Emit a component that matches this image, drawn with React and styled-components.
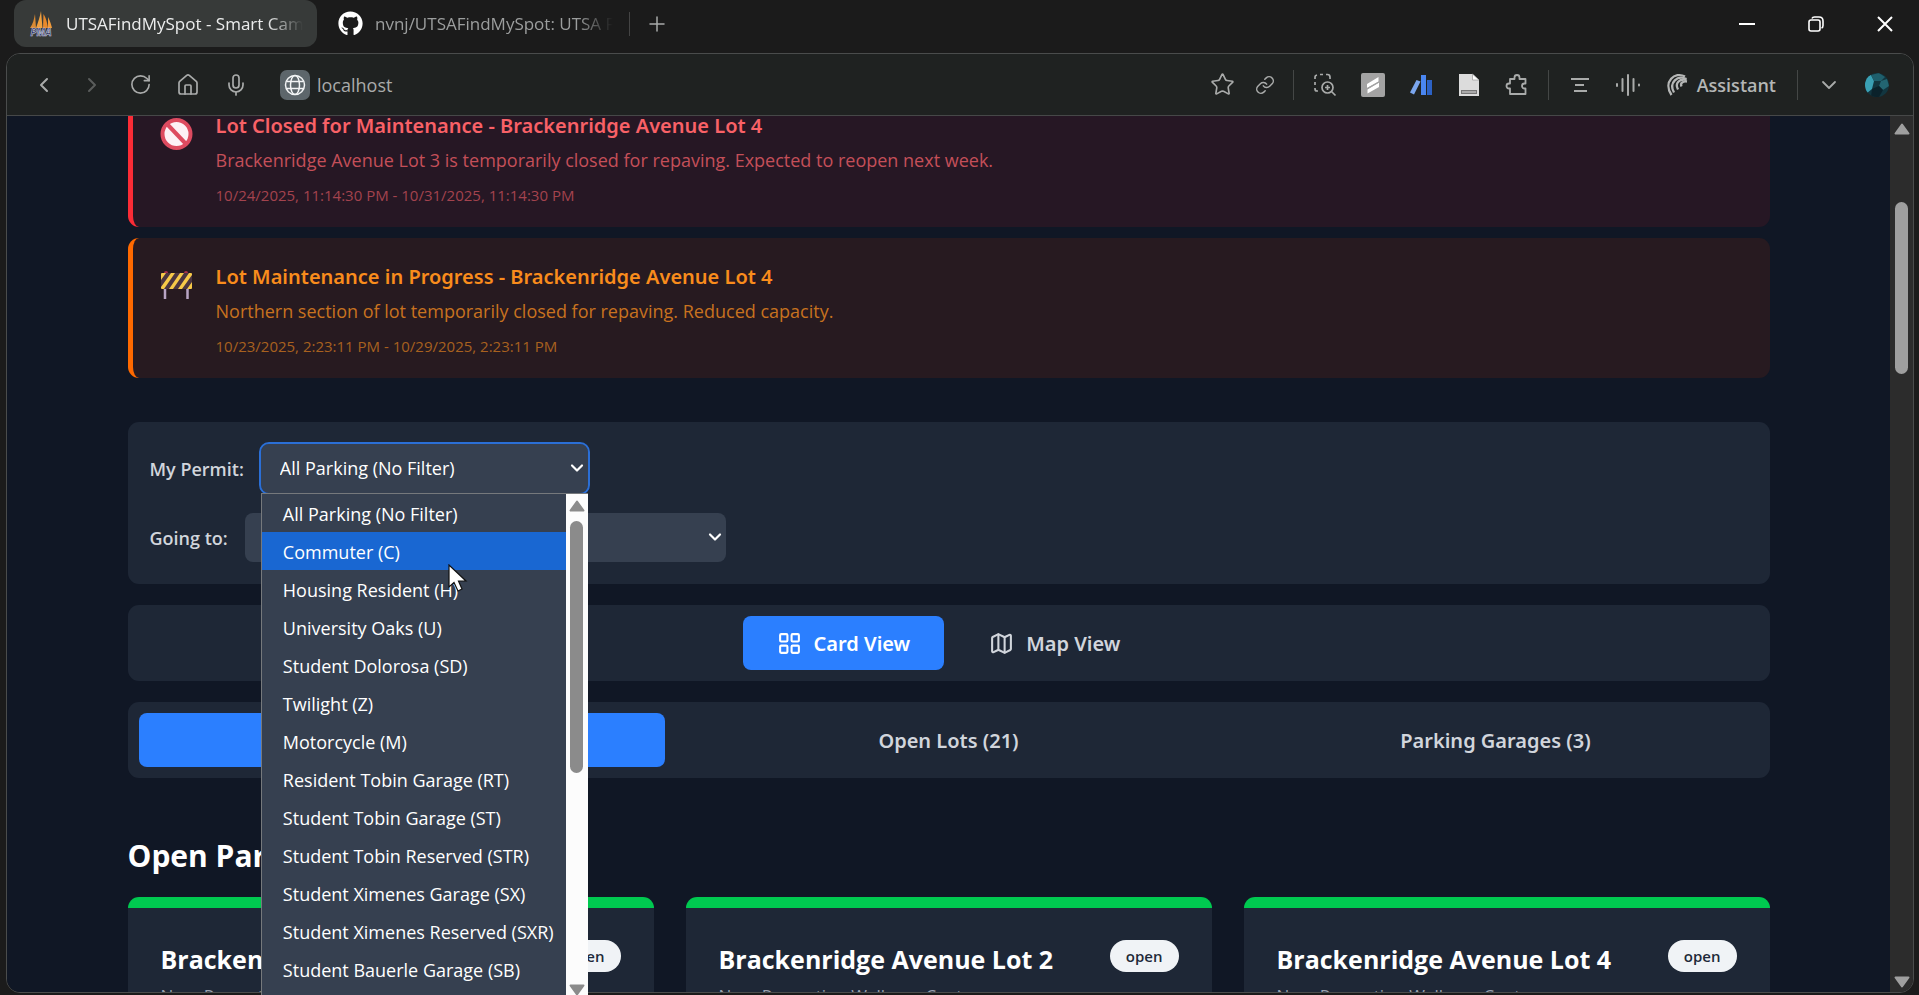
import React, { useState } from "react";
import styled, { createGlobalStyle } from "styled-components";
import {
  ChevronDown,
  ChevronLeft,
  ChevronRight,
  House,
  LayoutGrid,
  Link,
  Map,
  Mic,
  Plus,
  RotateCw,
  Star,
} from "lucide-react";
import { FaGithub } from "react-icons/fa";

const permits = [
  "All Parking (No Filter)",
  "Commuter (C)",
  "Housing Resident (H)",
  "University Oaks (U)",
  "Student Dolorosa (SD)",
  "Twilight (Z)",
  "Motorcycle (M)",
  "Resident Tobin Garage (RT)",
  "Student Tobin Garage (ST)",
  "Student Tobin Reserved (STR)",
  "Student Ximenes Garage (SX)",
  "Student Ximenes Reserved (SXR)",
  "Student Bauerle Garage (SB)",
];

const alerts = [
  {
    kind: "closed",
    title: "Lot Closed for Maintenance - Brackenridge Avenue Lot 4",
    text: "Brackenridge Avenue Lot 3 is temporarily closed for repaving. Expected to reopen next week.",
    dates: "10/24/2025, 11:14:30 PM - 10/31/2025, 11:14:30 PM",
  },
  {
    kind: "maintenance",
    title: "Lot Maintenance in Progress - Brackenridge Avenue Lot 4",
    text: "Northern section of lot temporarily closed for repaving. Reduced capacity.",
    dates: "10/23/2025, 2:23:11 PM - 10/29/2025, 2:23:11 PM",
  },
];

const alertColors = {
  closed: { bar: "#fb2c36", bg: "#261724", title: "#f96167", text: "#c44f59", dates: "#a3434e" },
  maintenance: { bar: "#ff6900", bg: "#271a20", title: "#f98c1c", text: "#c8721f", dates: "#a8611f" },
};

const lots = ["Brackenridge Avenue Lot 1", "Brackenridge Avenue Lot 2", "Brackenridge Avenue Lot 4"];

const SailIcon = () => (
  <svg width="26" height="26" viewBox="0 0 26 26" aria-hidden="true">
    <path d="M2 17 C5 13 6 8 7 3 L8 17Z" fill="#d98a34" />
    <path d="M8 17 C10 11 12 6 13 0 L14.500 17Z" fill="#f0a040" />
    <path d="M15 17 L15.500 3 C18 7 19 11 20 17Z" fill="#e8892c" />
    <path d="M20 17 L20 6 C22 10 23 13 24 17Z" fill="#f29a3a" />
    <text x="13" y="25" textAnchor="middle" fontSize="10" fontStyle="italic" fontWeight="700" fontFamily="Open Sans" fill="#1d2450" stroke="#c9cbe0" strokeWidth="0.6">
      PMA
    </text>
  </svg>
);

const GlobeIcon = () => (
  <svg width="22" height="22" viewBox="0 0 22 22" fill="none" stroke="#f2f4f5" strokeWidth="1.5" aria-hidden="true">
    <circle cx="11" cy="11" r="9.500" />
    <ellipse cx="11" cy="11" rx="4.500" ry="9.500" />
    <path d="M2.500 7.500h17M2.500 14.500h17" />
  </svg>
);

const CaptureIcon = () => (
  <svg width="24" height="24" viewBox="0 0 24 24" fill="none" stroke="currentColor" strokeWidth="1.700" aria-hidden="true">
    <path d="M2 6V4.500A2.500 2.500 0 0 1 4 2M7 1.500h3M13 1.500h1.500A2.500 2.500 0 0 1 17 4v2M2 9v3M2 15v1a2 2 0 0 0 2 2h1" />
    <circle cx="14.500" cy="14.500" r="5.500" />
    <path d="M18.500 18.500l4 4M12 14.500h5M14.500 12v5" />
  </svg>
);

const StripeIcon = () => (
  <svg width="24" height="24" viewBox="0 0 24 24" aria-hidden="true">
    <rect width="24" height="24" rx="2" fill="#a3a3a3" />
    <path d="M6 11L17.500 4V8.500L6 15ZM6.500 16.500L18 9.500V14L6.500 20.500Z" fill="#fff" />
    <path d="M6 15.700L18 9" stroke="#a3a3a3" strokeWidth="1.200" />
  </svg>
);

const BarsIcon = () => (
  <svg width="24" height="24" viewBox="0 0 24 24" aria-hidden="true">
    <path d="M7.500 7L11.500 8.500L5 21.500L1 19.500Z" fill="#7ba6ee" />
    <rect x="12" y="2" width="5" height="20" fill="#4a86f0" />
    <rect x="18" y="7" width="5" height="15" fill="#2c62c4" />
  </svg>
);

const PageIcon = () => (
  <svg width="24" height="24" viewBox="0 0 24 24" aria-hidden="true">
    <path d="M2 1H15.500L22 7V23H2Z" fill="#dcdcdc" />
    <path d="M15.500 1V7H22Z" fill="#fff" stroke="#999" strokeWidth="0.7" />
    <rect x="4.500" y="17.500" width="15" height="3" fill="#aaa" stroke="#777" />
  </svg>
);

const PuzzleIcon = () => (
  <svg width="24" height="24" viewBox="0 0 24 24" fill="none" stroke="currentColor" strokeWidth="1.800" strokeLinejoin="round" aria-hidden="true">
    <path d="M5 6H9.500V4.500A2.500 2.500 0 0 1 14.500 4.500V6H20.500V10.500H19.500A2.500 2.500 0 0 0 19.500 15.500H20.500V21H5V15.500H4A2.500 2.500 0 0 1 4 10.500H5Z" />
  </svg>
);

const LinesIcon = () => (
  <svg width="20" height="18" viewBox="0 0 20 18" stroke="currentColor" strokeWidth="2" aria-hidden="true">
    <path d="M1 3h18M5 9h9M4 15h13" />
  </svg>
);

const WaveIcon = () => (
  <svg width="26" height="24" viewBox="0 0 26 24" stroke="currentColor" strokeWidth="2" strokeLinecap="round" aria-hidden="true">
    <path d="M2 11v2M7.500 6v12M13 2v20M18.500 6v12M24 11.500v1" />
  </svg>
);

const AssistantIcon = () => (
  <svg width="22" height="24" viewBox="0 0 22 24" fill="none" stroke="currentColor" strokeWidth="2.300" aria-hidden="true">
    <path d="M19 3.500C9 -2 -3.500 9 5.500 22" />
    <path d="M20.500 6C11.500 1.500 2.500 9.500 8 19.500" />
    <path d="M20.500 7C13.500 5.500 8.500 10 12 16.500" />
    <path d="M21 8.500C16.500 8 14 10.500 15.500 13.500" />
  </svg>
);

const AvatarIcon = () => (
  <svg width="24" height="24" viewBox="0 0 24 24" aria-hidden="true">
    <defs>
      <clipPath id="avatar">
        <circle cx="12" cy="12" r="12" />
      </clipPath>
    </defs>
    <g clipPath="url(#avatar)">
      <rect width="24" height="24" fill="#123640" />
      <path d="M0 4L6 2L9 8L7 16L2 20L0 18Z" fill="#3aa0b4" />
      <path d="M6 2L14 0L20 4L16 8L9 8Z" fill="#1f5f6c" />
      <path d="M16 8L22 6L24 13L18 17L14 13Z" fill="#236572" />
      <path d="M7 16L14 13L18 17L14 24H6Z" fill="#0b222b" />
    </g>
  </svg>
);

const NoEntryIcon = () => (
  <svg width="33" height="33" viewBox="0 0 33 33" aria-hidden="true">
    <circle cx="16.500" cy="16" r="14" fill="#fdf1f6" stroke="#dd4b60" strokeWidth="4" />
    <path d="M7 6L26 26" stroke="#dd4b60" strokeWidth="4" />
  </svg>
);

const BarrierIcon = () => (
  <svg width="33" height="33" viewBox="0 0 33 33" aria-hidden="true">
    <path d="M5 18v12M27.500 18v12" stroke="#b9a5c4" strokeWidth="2.500" />
    <circle cx="6" cy="4" r="2" fill="#a8324b" />
    <circle cx="26" cy="4" r="2" fill="#a8324b" />
    <rect x="1" y="4" width="31" height="16" rx="1" fill="#f7c948" />
    <path d="M1 11L6 4H11L1 18ZM4 20L15 4H20L9 20ZM13 20L24 4H29L18 20ZM22 20L32 6V13L27 20Z" fill="#4a3440" />
  </svg>
);

const Triangle = ({ down }) => (
  <svg width="16" height="12" viewBox="0 0 16 12" fill="currentColor" stroke="currentColor" strokeWidth="2" strokeLinejoin="round" aria-hidden="true">
    <path d={down ? "M1.500 1.500H14.500L8 10.500Z" : "M1.500 10.500H14.500L8 1.500Z"} />
  </svg>
);

const App = () => {
  const [permit, setPermit] = useState(permits[0]);
  const [view, setView] = useState("card");
  const [tab, setTab] = useState("all");

  return (
    <>
      <GlobalStyle />
      <Browser>
        <TabBar>
          <BrowserTab current>
            <SailIcon />
            <TabTitle>UTSAFindMySpot - Smart Campus</TabTitle>
          </BrowserTab>
          <BrowserTab>
            <FaGithub size={25} color="#fff" />
            <TabTitle>nvnj/UTSAFindMySpot: UTSA Find</TabTitle>
          </BrowserTab>
          <TabDivider />
          <IconButton aria-label="New tab">
            <Plus size={24} strokeWidth={1.5} />
          </IconButton>
          <WindowControls>
            <WindowButton aria-label="Minimize">
              <svg width="16" height="16" stroke="#fff" strokeWidth="2">
                <path d="M0 8H16" />
              </svg>
            </WindowButton>
            <WindowButton aria-label="Restore">
              <svg width="16" height="16" fill="none" stroke="#fff" strokeWidth="1.6">
                <rect x="1" y="4" width="11" height="11" rx="2" />
                <path d="M4 2.500Q4.500 1 6.500 1H11Q15 1 15 5V9.500Q15 11.500 13.500 12" />
              </svg>
            </WindowButton>
            <WindowButton aria-label="Close">
              <svg width="16" height="16" stroke="#fff" strokeWidth="2">
                <path d="M1 1L15 15M15 1L1 15" />
              </svg>
            </WindowButton>
          </WindowControls>
        </TabBar>

        <Frame>
          <Toolbar>
            <IconButton aria-label="Back">
              <ChevronLeft size={24} />
            </IconButton>
            <IconButton aria-label="Forward" faded>
              <ChevronRight size={24} />
            </IconButton>
            <IconButton aria-label="Reload">
              <RotateCw size={23} strokeWidth={1.7} />
            </IconButton>
            <IconButton aria-label="Home">
              <House size={24} strokeWidth={1.7} />
            </IconButton>
            <IconButton aria-label="Voice search">
              <Mic size={24} strokeWidth={1.7} />
            </IconButton>
            <Address>
              <SiteBadge>
                <GlobeIcon />
              </SiteBadge>
              localhost
            </Address>
            <IconButton aria-label="Bookmark" narrow>
              <Star size={25} strokeWidth={1.6} />
            </IconButton>
            <IconButton aria-label="Copy link" narrow>
              <Link size={20} strokeWidth={1.8} />
            </IconButton>
            <Divider />
            <IconButton aria-label="Capture">
              <CaptureIcon />
            </IconButton>
            <IconButton aria-label="Snippets">
              <StripeIcon />
            </IconButton>
            <IconButton aria-label="Statistics">
              <BarsIcon />
            </IconButton>
            <IconButton aria-label="Page">
              <PageIcon />
            </IconButton>
            <IconButton aria-label="Extensions">
              <PuzzleIcon />
            </IconButton>
            <Divider />
            <IconButton aria-label="Summary">
              <LinesIcon />
            </IconButton>
            <IconButton aria-label="Listen">
              <WaveIcon />
            </IconButton>
            <AssistantButton>
              <AssistantIcon />
              Assistant
            </AssistantButton>
            <Divider />
            <IconButton aria-label="More">
              <ChevronDown size={24} strokeWidth={1.8} />
            </IconButton>
            <IconButton aria-label="Profile">
              <AvatarIcon />
            </IconButton>
          </Toolbar>

          <Viewport>
            <Page>
              <Content>
                <AlertList>
                  {alerts.map((item) => (
                    <Alert key={item.kind} kind={item.kind}>
                      <AlertIcon>{item.kind === "closed" ? <NoEntryIcon /> : <BarrierIcon />}</AlertIcon>
                      <div>
                        <AlertTitle kind={item.kind}>{item.title}</AlertTitle>
                        <AlertText kind={item.kind}>{item.text}</AlertText>
                        <AlertDates kind={item.kind}>{item.dates}</AlertDates>
                      </div>
                    </Alert>
                  ))}
                </AlertList>

                <Filters>
                  <FilterRow>
                    <FilterLabel htmlFor="permit">My Permit:</FilterLabel>
                    <SelectBox width="327px">
                      <Select id="permit" open value={permit} onChange={(e) => setPermit(e.target.value)}>
                        {permits.map((name) => (
                          <option key={name}>{name}</option>
                        ))}
                      </Select>
                      <SelectArrow size={20} strokeWidth={2.6} />
                      <Menu>
                        <Options role="listbox" aria-label="My Permit">
                          {permits.map((name) => (
                            <Option
                              key={name}
                              role="option"
                              aria-selected={name === permit}
                              hovered={name === "Commuter (C)"}
                              onClick={() => setPermit(name)}
                            >
                              {name}
                            </Option>
                          ))}
                        </Options>
                        <MenuScroll>
                          <Triangle />
                          <MenuThumb />
                          <Triangle down />
                        </MenuScroll>
                        <Pointer width="20" height="29" viewBox="0 0 20 29" aria-hidden="true">
                          <path d="M1 1V23L6 18.500L10 27L14 25L10.500 17H18Z" fill="#fff" stroke="#111" strokeWidth="1.2" />
                        </Pointer>
                      </Menu>
                    </SelectBox>
                  </FilterRow>
                  <FilterRow>
                    <FilterLabel htmlFor="building">Going to:</FilterLabel>
                    <SelectBox width="481px">
                      <Select id="building" defaultValue="Select a building">
                        <option>Select a building</option>
                      </Select>
                      <SelectArrow size={20} strokeWidth={2.6} />
                    </SelectBox>
                  </FilterRow>
                </Filters>

                <ButtonBar centered>
                  <ViewButton active={view === "card"} onClick={() => setView("card")}>
                    <LayoutGrid size={25} />
                    Card View
                  </ViewButton>
                  <ViewButton active={view === "map"} onClick={() => setView("map")}>
                    <Map size={25} />
                    Map View
                  </ViewButton>
                </ButtonBar>

                <ButtonBar>
                  <TabButton active={tab === "all"} onClick={() => setTab("all")}>
                    All (24)
                  </TabButton>
                  <TabButton active={tab === "lots"} onClick={() => setTab("lots")}>
                    Open Lots (21)
                  </TabButton>
                  <TabButton active={tab === "garages"} onClick={() => setTab("garages")}>
                    Parking Garages (3)
                  </TabButton>
                </ButtonBar>

                <SectionTitle>Open Parking Lots</SectionTitle>
                <Cards>
                  {lots.map((name) => (
                    <Card key={name}>
                      <CardHead>
                        <CardTitle>{name}</CardTitle>
                        <Status>open</Status>
                      </CardHead>
                      <CardText>Near Recreation Wellness Center</CardText>
                    </Card>
                  ))}
                </Cards>
              </Content>
            </Page>
            <ScrollBar>
              <Triangle />
              <ScrollThumb />
              <Triangle down />
            </ScrollBar>
          </Viewport>
        </Frame>
      </Browser>
    </>
  );
};

const GlobalStyle = createGlobalStyle`
  * {
    box-sizing: border-box;
  }
  body {
    margin: 0;
    background: #1b1b1b;
    color: #fff;
    font-family: "Open Sans", "Noto Sans", sans-serif;
    overflow: hidden;
  }
  button, select {
    font-family: inherit;
    border: none;
    cursor: pointer;
  }
  h2, h3, p, ul {
    margin: 0;
    padding: 0;
  }
  svg {
    flex: none;
  }
`;

const Browser = styled.div`
  display: flex;
  flex-direction: column;
  height: 100vh;
  padding: 0 5px 2px 6px;
`;

const TabBar = styled.div`
  display: flex;
  align-items: center;
  height: 53px;
  padding: 0 0 6px 8px;
  margin-right: -5px;
`;

const BrowserTab = styled.div.withConfig({ shouldForwardProp: (p) => p !== "current" })`
  display: flex;
  align-items: center;
  gap: 12px;
  width: 303px;
  height: 47px;
  padding: 0 14px;
  margin-right: 7px;
  border-radius: 12px;
  background: ${(props) => (props.current ? "#373a39" : "transparent")};
  color: ${(props) => (props.current ? "#eceded" : "#9c9e9e")};
`;

const TabTitle = styled.span`
  flex: 1;
  overflow: hidden;
  white-space: nowrap;
  font-size: 17px;
  mask-image: linear-gradient(to right, #000 85%, transparent);
`;

const TabDivider = styled.span`
  width: 1px;
  height: 24px;
  margin: 0 3px 0 -5px;
  background: #444;
`;

const WindowControls = styled.div`
  display: flex;
  margin-left: auto;
`;

const WindowButton = styled.button`
  display: flex;
  align-items: center;
  justify-content: center;
  width: 69px;
  height: 46px;
  background: none;
`;

const Frame = styled.div`
  display: flex;
  flex: 1;
  flex-direction: column;
  min-height: 0;
  border: 1px solid #4a4c4c;
  border-radius: 14px;
  overflow: hidden;
`;

const Toolbar = styled.div`
  display: flex;
  flex: none;
  align-items: center;
  height: 62px;
  padding: 0 12px 0 13px;
  background: #1f2221;
  border-bottom: 1px solid #464848;
`;

const IconButton = styled.button.withConfig({ shouldForwardProp: (p) => p !== "narrow" && p !== "faded" })`
  display: flex;
  align-items: center;
  justify-content: center;
  width: ${(props) => (props.narrow ? "42px" : "48px")};
  height: 42px;
  padding: 0;
  background: none;
  color: ${(props) => (props.faded ? "#5a5d5c" : "#a9abaa")};
`;

const Address = styled.div`
  display: flex;
  flex: 1;
  align-items: center;
  gap: 7px;
  margin-left: 20px;
  color: #a9abaa;
  font-size: 18px;
`;

const SiteBadge = styled.span`
  display: flex;
  align-items: center;
  justify-content: center;
  width: 30px;
  height: 30px;
  border-radius: 7px;
  background: #5d666b;
`;

const Divider = styled.span`
  width: 1px;
  height: 30px;
  margin: 0 7px;
  background: #444746;
`;

const AssistantButton = styled.button`
  display: flex;
  align-items: center;
  gap: 9px;
  height: 42px;
  padding: 0 14px;
  background: none;
  color: #b4b6b5;
  font-size: 18px;
  font-weight: 600;
`;

const Viewport = styled.div`
  display: flex;
  flex: 1;
  min-height: 0;
`;

const Page = styled.main`
  flex: 1;
  overflow: hidden;
  background: #101725;
`;

const Content = styled.div`
  max-width: 1642px;
  margin: 0 auto;
`;

const AlertList = styled.div`
  display: flex;
  flex-direction: column;
  gap: 11px;
  /* the page is scrolled past the top of the first alert */
  margin: -29px 0 44px;
`;

const Alert = styled.div`
  display: flex;
  gap: 23px;
  padding: 24px 27px 21px;
  border-left: 5px solid ${(props) => alertColors[props.kind].bar};
  border-radius: 11px;
  background: ${(props) => alertColors[props.kind].bg};
`;

const AlertIcon = styled.span`
  margin-top: 7px;
`;

const AlertTitle = styled.h3`
  margin-bottom: 5px;
  color: ${(props) => alertColors[props.kind].title};
  font-family: "Noto Sans", sans-serif;
  font-size: 20px;
  font-weight: 600;
  line-height: 30px;
`;

const AlertText = styled.p`
  margin-bottom: 10px;
  color: ${(props) => alertColors[props.kind].text};
  font-size: 18px;
  line-height: 28px;
`;

const AlertDates = styled.p`
  color: ${(props) => alertColors[props.kind].dates};
  font-size: 15px;
  line-height: 22px;
`;

const Filters = styled.div`
  display: flex;
  flex-direction: column;
  gap: 20px;
  margin-bottom: 21px;
  padding: 22px;
  border-radius: 11px;
  background: #1e2736;
`;

const FilterRow = styled.div`
  display: flex;
  align-items: center;
  gap: 17px;
`;

const FilterLabel = styled.label`
  color: #d1d5dc;
  font-size: 18px;
  font-weight: 600;
`;

const SelectBox = styled.div`
  position: relative;
  width: ${(props) => props.width};
`;

const Select = styled.select.withConfig({ shouldForwardProp: (p) => p !== "open" })`
  display: block;
  width: 100%;
  height: 49px;
  padding: 0 40px 2px 19px;
  border-radius: 8px;
  outline: ${(props) => (props.open ? "2px solid #2b6fd6" : "none")};
  appearance: none;
  background: #364050;
  color: #fff;
  font-size: 18px;
`;

const SelectArrow = styled(ChevronDown)`
  position: absolute;
  top: 14px;
  right: 1px;
  pointer-events: none;
`;

const Menu = styled.div`
  /* fixed so that the list can hang over the window edge, like a native popup */
  position: fixed;
  z-index: 10;
  display: flex;
  width: 327px;
  max-height: 505px;
  overflow: hidden;
  border: solid #76797c;
  border-width: 1px 0 0 1px;
  background: #364050;
`;

const Options = styled.ul`
  flex: 1;
  height: 505px;
  list-style: none;
`;

const Option = styled.li.withConfig({ shouldForwardProp: (p) => p !== "hovered" })`
  padding: 2px 0 0 21px;
  background: ${(props) => (props.hovered ? "#1967d2" : "transparent")};
  font-size: 18px;
  line-height: 36px;
  white-space: nowrap;
`;

const MenuScroll = styled.div`
  display: flex;
  flex-direction: column;
  align-items: center;
  width: 22px;
  padding: 6px 0 2px;
  background: #fcfcfc;
  color: #8b8b8b;
`;

const MenuThumb = styled.span`
  width: 13px;
  height: 252px;
  margin: 9px 0 auto;
  border-radius: 7px;
  background: #8b8b8b;
`;

const Pointer = styled.svg`
  position: absolute;
  top: 70px;
  left: 186px;
`;

const ButtonBar = styled.div.withConfig({ shouldForwardProp: (p) => p !== "centered" })`
  display: flex;
  justify-content: center;
  gap: ${(props) => (props.centered ? "11px" : "21px")};
  margin-bottom: 21px;
  padding: 11px;
  border-radius: 11px;
  background: #1e2736;
`;

const BarButton = styled.button.withConfig({ shouldForwardProp: (p) => p !== "active" })`
  display: flex;
  align-items: center;
  justify-content: center;
  gap: 12px;
  height: 54px;
  border-radius: 8px;
  background: ${(props) => (props.active ? "#2b7fff" : "transparent")};
  color: ${(props) => (props.active ? "#fff" : "#d1d5dc")};
  font-family: "Noto Sans", sans-serif;
  font-size: 20px;
  font-weight: 600;
`;

const ViewButton = styled(BarButton)`
  padding: 0 34px;
`;

const TabButton = styled(BarButton)`
  flex: 1;
`;

const SectionTitle = styled.h2`
  margin: 58px 0 21px;
  font-size: 30px;
  font-weight: 700;
  line-height: 40px;
`;

const Cards = styled.div`
  display: grid;
  grid-template-columns: repeat(3, 1fr);
  gap: 32px;
`;

const Card = styled.article`
  height: 320px;
  padding: 32px 33px;
  border-top: 11px solid #00c950;
  border-radius: 11px;
  background: #1e2736;
`;

const CardHead = styled.div`
  display: flex;
  align-items: flex-start;
  justify-content: space-between;
  margin-bottom: 5px;
`;

const CardTitle = styled.h3`
  font-size: 25px;
  font-weight: 700;
  line-height: 38px;
`;

const Status = styled.span`
  padding: 0 16px;
  border-radius: 16px;
  background: #f0f3f6;
  color: #1e2939;
  font-size: 15px;
  font-weight: 600;
  line-height: 32px;
`;

const CardText = styled.p`
  color: #99a1af;
  font-size: 17px;
  line-height: 26px;
`;

const ScrollBar = styled.div`
  display: flex;
  flex-direction: column;
  align-items: center;
  width: 23px;
  padding: 7px 0 4px;
  background: #2c2c2c;
  color: #9f9f9f;
`;

const ScrollThumb = styled.span`
  width: 13px;
  height: 172px;
  margin: 67px 0 auto;
  border-radius: 7px;
  background: #9f9f9f;
`;

export default App;
